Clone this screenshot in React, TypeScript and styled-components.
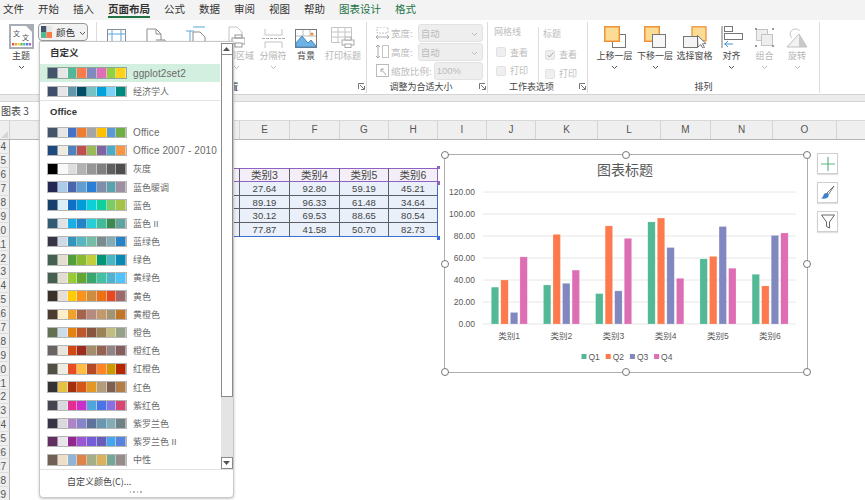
import React from 'react';
import styled, { createGlobalStyle } from 'styled-components';

const Global = createGlobalStyle`
  html, body { margin: 0; padding: 0; overflow: hidden; background: #fff; }
  body { font-family: "Noto Sans CJK SC", "Liberation Sans", sans-serif; }
  * { box-sizing: border-box; }
`;

const Page = styled.div`
  position: relative; width: 865px; height: 500px; overflow: hidden; background: #fff;
  display: flex; flex-direction: column;
`;
const TabBar = styled.div`
  height: 20px; background: #f3f3f3; display: flex; gap: 14px; padding-left: 3px; flex: none;
`;
const Tab = styled.div<{ $active?: boolean; $green?: boolean }>`
  position: relative; font-size: 10.5px; line-height: 17px; white-space: nowrap;
  color: ${p => (p.$green ? '#217346' : '#333')};
  font-weight: ${p => (p.$active ? 700 : 400)};
  ${p => p.$active ? `border-bottom: 2px solid #217346; height: 17.5px;` : ''}
`;
const Ribbon = styled.div`
  height: 75px; flex: none; background: #fff; display: flex; padding: 2px 0 1px; border-bottom: 1px solid #d4d4d4;
`;
const Group = styled.div<{ $w: number; $noBorder?: boolean }>`
  width: ${p => p.$w}px; flex: none; display: flex; flex-direction: column;
  border-right: ${p => (p.$noBorder ? 'none' : '1px solid #dcdcdc')};
`;
const GroupBody = styled.div<{ $pl?: number }>`
  flex: 1; display: flex; padding-left: ${p => p.$pl || 0}px; min-height: 0;
`;
const GroupFooter = styled.div`
  height: 13px; display: flex; align-items: center; flex: none;
`;
const GroupTitle = styled.div`
  flex: 1; text-align: center; font-size: 9px; line-height: 13px; color: #444;
`;
const LauncherBox = styled.div<{ $w: number }>`
  width: ${p => p.$w}px; display: flex; justify-content: flex-end; padding-right: 1px; flex: none;
`;
const LargeBtn = styled.div<{ $w: number }>`
  width: ${p => p.$w}px; flex: none; display: flex; flex-direction: column; align-items: center;
`;
const IconSlot = styled.div`
  height: 28px; display: flex; align-items: flex-end; justify-content: center; flex: none; padding-bottom: 2px;
`;
const BtnLabel = styled.div<{ $off?: boolean }>`
  font-size: 9px; line-height: 12px; white-space: nowrap;
  color: ${p => (p.$off ? '#b5b5b5' : '#444')};
`;
const Chevron = styled.svg`
  width: 7px; height: 5px; margin-top: 3px; flex: none;
`;
const ThemeCol = styled.div`
  display: flex; flex-direction: column; align-items: center; width: 24px; margin-left: 9px; padding-top: 2px;
`;
const ThemeTile = styled.div`
  width: 25px; height: 25px; background: #fff; border: 2px solid #a9adb5; margin-bottom: 1px;
  display: flex; align-items: center; justify-content: center;
`;
const ColorBtn = styled.div`
  margin: 1px 0 0 5px; width: 50px; height: 18px; border: 1px solid #9a9a9a; border-radius: 4px; background: #f2f2f2;
  display: flex; align-items: center; padding-left: 2px; gap: 4px; font-size: 9.5px; color: #333;
`;
const SizeCol = styled.div`
  flex: 1; display: flex; flex-direction: column; padding: 1px 5px 0 9px;
`;
const SizeRow = styled.div`
  height: 19px; display: flex; align-items: center; gap: 2px; flex: none;
`;
const OffText = styled.span`
  font-size: 9.5px; color: #bcbcbc; white-space: nowrap; flex: 1;
`;
const SelectBox = styled.div<{ $w: number }>`
  width: ${p => p.$w}px; height: 18px; flex: none; background: #eeeeee; border: 1px solid #e2e2e2; border-radius: 3px;
  display: flex; align-items: center; justify-content: space-between; padding: 0 4px 0 2px;
  font-size: 9.5px; color: #bcbcbc; font-family: "Liberation Sans", "Noto Sans CJK SC", sans-serif;
`;
const OptCol = styled.div<{ $w: number; $line?: boolean }>`
  width: ${p => p.$w}px; display: flex; flex-direction: column; padding-top: 3px; flex: none;
  ${p => (p.$line ? 'border-left: 1px solid #dedede; padding-left: 4px; height: 56px; margin-top: 5px; padding-top: 0;' : '')}
`;
const OptHead = styled.div`
  font-size: 9px; line-height: 14px; color: #bcbcbc; height: 18px; white-space: nowrap;
`;
const OptRow = styled.div`
  height: 19px; display: flex; align-items: center; gap: 4px; padding-left: 2px; font-size: 9px; color: #bcbcbc; white-space: nowrap;
`;
const CheckBox = styled.div`
  width: 10px; height: 10px; background: #efefef; border: 1px solid #e2e2e2; border-radius: 2px; flex: none;
  display: flex; align-items: center; justify-content: center;
`;
const Band = styled.div`
  height: 7px; flex: none; background: #ececec; border-bottom: 1px solid #d4d4d4;
`;
const NameBar = styled.div`
  height: 18px; flex: none; background: #fff; display: flex; align-items: center; padding: 0 0 1px 1px;
  font-size: 10px; color: #444;
`;

/* Sheet */
const Sheet = styled.div`
  flex: 1; display: flex; flex-direction: column; min-height: 0; overflow: hidden;
`;
const HeaderRow = styled.div`
  height: 20px; flex: none; display: flex; background: #efefef; border-top: 1px solid #d8d8d8; border-bottom: 1px solid #b5b5b5;
`;
const Corner = styled.div`
  width: 10px; flex: none; border-right: 1px solid #d0d0d0; display: flex; align-items: flex-end; justify-content: flex-end; padding: 0 1px 1px 0;
`;
const CornerMark = styled.div`
  width: 0; height: 0; border-left: 7px solid transparent; border-bottom: 7px solid #d6d6d6;
`;
const ColHead = styled.div<{ $w: number }>`
  width: ${p => p.$w}px; flex: none; border-right: 1px solid #d4d4d4; text-align: center;
  font: 10px/18px "Liberation Sans", sans-serif; color: #555;
`;
const Row = styled.div`
  height: 13.9px; flex: none; display: flex;
`;
const RowHead = styled.div`
  width: 10px; flex: none; background: #efefef; border-right: 1px solid #b5b5b5; border-bottom: 1px solid #dcdcdc;
  display: flex; justify-content: flex-end; align-items: center; overflow: hidden; padding: 1px 3px 0 0;
  font: 10px/13px "Liberation Sans", sans-serif; color: #555; white-space: nowrap;
`;
const Cell = styled.div<{ $w: number; $head?: boolean; $fill?: boolean; $last?: boolean; $top?: boolean; $end?: boolean }>`
  width: ${p => p.$w}px; flex: none; text-align: center; white-space: nowrap;
  font-family: "Liberation Sans", "Noto Sans CJK SC", sans-serif;
  font-size: ${p => (p.$head ? 10.5 : 9.5)}px; line-height: 13px; color: #444;
  ${p => p.$fill ? `background: ${p.$head ? '#f3eef8' : '#e9f0fa'};` : ''}
  ${p => p.$fill && p.$head ? 'border-top: 1.5px solid #8e62c0; border-bottom: 1.5px solid #8e62c0;' : ''}
  ${p => p.$fill && !p.$head ? `border-bottom: 1px solid ${p.$end ? '#3b6fd0' : '#5a5f68'};` : ''}
  ${p => p.$fill ? `border-right: ${p.$last ? (p.$head ? '1.5px solid #8e62c0' : '1.5px solid #3b6fd0') : '1px solid #5a5f68'};` : ''}
`;
const CornerDot = styled.i<{ $c: string; $top: number }>`
  position: absolute; left: 436.5px; top: ${p => p.$top}px; width: 3.5px; height: 3.5px; background: ${p => p.$c};
`;

/* Theme colours menu */
const Menu = styled.div`
  position: absolute; left: 39px; top: 41px; width: 195px; height: 457px; background: #fff;
  border: 1px solid #c8c8c8; border-radius: 0 0 4px 4px; box-shadow: 0 1px 3px rgba(0,0,0,.22);
  display: flex; flex-direction: column;
`;
const MenuBody = styled.div`
  display: flex; height: 428px; flex: none; border-bottom: 1px solid #e2e2e2;
`;
const MenuList = styled.div`
  width: 180px; flex: none; display: flex; flex-direction: column;
`;
const MenuHead = styled.div`
  height: 22px; flex: none; padding: 0 0 2px 10px; display: flex; align-items: center;
  font: 700 9.5px "Liberation Sans", "Noto Sans CJK SC", sans-serif; color: #333;
`;
const MenuItem = styled.div<{ $sel?: boolean }>`
  height: 18.2px; flex: none; display: flex; align-items: center; gap: 7px; padding-left: 8px;
  background: ${p => (p.$sel ? '#d3efdf' : 'transparent')};
`;
const Strip = styled.div<{ $sel?: boolean }>`
  display: flex; width: 78px; height: 9.5px; flex: none;
  outline: 1px solid ${p => (p.$sel ? '#8fa898' : '#b5b5b5')};
`;
const Swatch = styled.i<{ $c: string }>`
  flex: 1; background: ${p => p.$c}; border-right: .5px solid rgba(255,255,255,.45);
`;
const ItemLabel = styled.span<{ $latin?: boolean }>`
  font-family: "Liberation Sans", "Noto Sans CJK SC", sans-serif; color: #6a6a6a; white-space: nowrap;
  font-size: ${p => (p.$latin ? 10 : 9)}px; letter-spacing: ${p => (p.$latin ? '.1px' : '0')};
`;
const Divider = styled.div`
  height: 1px; flex: none; background: #e2e2e2; margin-top: 0;
`;
const ScrollBar = styled.div`
  width: 12px; margin: 1px 0 0 .5px; flex: none; display: flex; flex-direction: column;
`;
const ScrollBtn = styled.div`
  height: 12px; flex: none; border: 1px solid #8a8a8a; background: #fff; display: flex; align-items: center; justify-content: center;
`;
const ScrollThumb = styled.div`
  height: 342px; flex: none; background: #fff; border: 1px solid #8a8a8a; border-top: none;
`;
const ScrollTrack = styled.div`
  flex: 1; background: #e4e4e4;
`;
const MenuFoot = styled.div`
  height: 21px; flex: none; padding: 5px 0 0 27px; font-size: 9px; line-height: 14px; color: #444;
`;
const Grip = styled.div`
  display: flex; gap: 2px; justify-content: center; flex: none; height: 5px; padding-right: 2px;
`;
const GripDot = styled.i`
  width: 1.5px; height: 1.5px; background: #b8b8b8; display: block;
`;

/* Chart */
const ChartLayer = styled.div`
  position: absolute; left: 444px; top: 154px; display: flex; gap: 9px; align-items: flex-start;
`;
const ChartFrame = styled.div`
  position: relative; width: 364px; height: 219px; background: #fff; border: 1.5px solid #adadad;
`;
const Handle = styled.i<{ $x: number; $y: number }>`
  position: absolute; width: 8px; height: 8px; border-radius: 50%; background: #fff; border: 1.2px solid #777;
  left: calc(${p => p.$x}% - 4px); top: calc(${p => p.$y}% - 4px);
`;
const SideButtons = styled.div`
  display: flex; flex-direction: column; gap: 8px; margin-top: -1px;
`;
const SideBtn = styled.div`
  width: 21px; height: 21px; background: #fff; border: 1px solid #cfcfcf; box-shadow: 0 1px 1px rgba(0,0,0,.12);
  display: flex; align-items: center; justify-content: center;
`;

const Chev = ({ c = '#555' }: { c?: string }) => (
  <Chevron viewBox="0 0 7 5"><path d="M1 1l2.5 2.5L6 1" fill="none" stroke={c} strokeWidth="1" /></Chevron>
);
const Launcher = () => (
  <svg width="7" height="7" viewBox="0 0 7 7"><path d="M.5 6V.5H6M6.5 3v3.5H3M2 2l4 4" fill="none" stroke="#666" strokeWidth=".9" /></svg>
);

const G = '#8c8c8c';
const Off = '#c4c4c4';
const B = '#5aa5dc';
const I = ({ w, h, children }: { w: number; h: number; children: React.ReactNode }) => (
  <svg width={w} height={h} viewBox={`0 0 ${w} ${h}`} fill="none">{children}</svg>
);
const MarginIcon = () => <I w={19} h={19}><rect x=".5" y=".5" width="18" height="18" stroke={G} /><path d="M5 0v19M14 0v19M0 5h19" stroke={B} /></I>;
const PageIcon = () => <I w={21} h={20}><path d="M2 1h9l5 5v13H2zM11 1v5h5" stroke={G} /><path d="M11 12h9v7h-9" stroke={G} fill="#fff" /></I>;
const SizeIcon = () => <I w={21} h={22}><path d="M5 5v17M1 5h8" stroke={B} /><path d="M8 1h12" stroke={B} /><path d="M8 6h7l5 5v10H8z" stroke={G} fill="#fff" /></I>;
const PrintAreaIcon = () => <I w={18} h={22}><path d="M2 1h8l5 5v7M2 1v19h4" stroke={Off} /><rect x="5" y="12" width="13" height="6" stroke="#9a9a9a" fill="#fff" /><rect x="8" y="9" width="7" height="3" stroke="#9a9a9a" /><rect x="8" y="17" width="7" height="4" stroke="#9a9a9a" fill="#fff" /></I>;
const BreakIcon = () => <I w={23} h={19}><path d="M3 0v6h17V0M3 19v-6h17v6" stroke={Off} /><path d="M0 9.5h23" stroke="#aaa" strokeDasharray="3 1" /></I>;
const BgIcon = () => (
  <I w={22} h={19}>
    <rect x=".5" y=".5" width="21" height="18" stroke="#777" fill="#fff" />
    <path d="M1 7h20M8 1v6M15 1v6" stroke="#bbb" />
    <path d="M1 18V14l6-7 6 7 3-3 5 6v1z" fill="#6db3e8" stroke="#4a86b8" />
    <circle cx="17" cy="5" r="1.5" fill="#ed8b2f" />
  </I>
);
const PrintTitleIcon = () => <I w={24} h={21}><path d="M.5.5h20v13H13M.5.5v15H9M.5 5h20M.5 10H13M7 1v14M14 1v9" stroke={Off} /><rect x="11" y="13" width="12" height="5" stroke="#aaa" fill="#fff" /><rect x="14" y="10" width="6" height="3" stroke="#aaa" fill="#fff" /><rect x="14" y="17" width="6" height="3.5" stroke="#aaa" fill="#fff" /></I>;
const UpIcon = () => <I w={22} h={22}><rect x="8.5" y="8.5" width="13" height="13" stroke="#777" fill="#fff" /><rect x=".8" y=".8" width="14.5" height="14.5" stroke="#ed8b2f" strokeWidth="1.4" fill="#fbdc95" /></I>;
const DownIcon = () => <I w={22} h={22}><rect x=".8" y=".8" width="14.5" height="14.5" stroke="#ed8b2f" strokeWidth="1.4" fill="#fbdc95" /><rect x="8.5" y="8.5" width="13" height="13" stroke="#777" fill="#f7f7f7" /></I>;
const PaneIcon = () => (
  <I w={24} h={22}>
    <rect x="9" y=".8" width="14" height="14" stroke="#ed8b2f" strokeWidth="1.2" fill="#fbdc95" />
    <rect x=".5" y="10.5" width="14" height="11" stroke="#777" fill="#f4f4f4" />
    <path d="M14.5 9.5l8.5 8-3.5.4 2 3.5-1.8.8-1.8-3.6-3 2.4z" fill="#fff" stroke="#555" strokeWidth=".8" />
  </I>
);
const AlignIcon = () => <I w={22} h={22}><path d="M1 0v22" stroke="#777" /><rect x="3.5" y=".5" width="8" height="5" stroke="#777" fill="#fff" /><rect x="3.5" y="7.5" width="18" height="6" stroke="#777" fill="#fff" /><path d="M3 18h9M7 15l-3 3 3 3" stroke="#3f97d9" /></I>;
const ComboIcon = () => <I w={21} h={21}><rect x="2.5" y="2.5" width="11" height="11" stroke={Off} fill="#eee" /><rect x="7.5" y="7.5" width="11" height="11" stroke={Off} fill="#eee" /><path d="M1 1h2v2H1zM18 1h2v2h-2zM1 18h2v2H1zM18 18h2v2h-2z" fill="#999" /></I>;
const RotateIcon = () => <I w={22} h={20}><path d="M1 19L13 6l8 13z" stroke="#c0c0c0" fill="#f2f2f2" /><path d="M13 6l8 13h-8z" fill="#c8c8c8" /><path d="M6 10C2 6 5 1 10 1c2 0 3 1 4 2" stroke="#c4c4c4" /></I>;
const WidthIcon = () => <I w={13} h={12}><path d="M1 0h11v6H1z" stroke={Off} strokeDasharray="2 1" /><path d="M0 10h13M2 8l-2 2 2 2M11 8l2 2-2 2" stroke="#aaa" /></I>;
const HeightIcon = () => <I w={13} h={13}><rect x="6.5" y=".5" width="6" height="12" stroke={Off} /><path d="M2 0v13M0 2l2-2 2 2M0 11l2 2 2-2" stroke="#aaa" /></I>;
const ScaleIcon = () => <I w={13} h={13}><rect x=".5" y=".5" width="12" height="12" stroke="#bbb" /><path d="M5 5l5 6M5 5v3M5 5h3" stroke="#aaa" /></I>;

const tabs = ['文件', '开始', '插入', '页面布局', '公式', '数据', '审阅', '视图', '帮助', '图表设计', '格式'];

const columns: [string, number][] = [
  ['A', 76], ['B', 50], ['C', 52], ['D', 52], ['E', 50], ['F', 50], ['G', 49], ['H', 49], ['I', 49], ['J', 49],
  ['K', 62], ['L', 63], ['M', 50], ['N', 62], ['O', 64], ['P', 80],
];

const tableRows: string[][] = [
  ['类别2', '类别3', '类别4', '类别5', '类别6'],
  ['35.50', '27.64', '92.80', '59.19', '45.21'],
  ['81.50', '89.19', '96.33', '61.48', '34.64'],
  ['37.00', '30.12', '69.53', '88.65', '80.54'],
  ['49.00', '77.87', '41.58', '50.70', '82.73'],
];

const custom: [string, string[]][] = [
  ['ggplot2set2', ['#44546a', '#e7e6e6', '#52b796', '#fb7b4b', '#7f8abf', '#df6fb4', '#93d040', '#ffd11a']],
  ['经济学人', ['#3f4f6b', '#e7e6e6', '#6297ab', '#014d64', '#74c2c4', '#01a2d9', '#7ad2f6', '#00887d']],
];
const office: [string, string[]][] = [
  ['Office', ['#44546a', '#e7e6e6', '#4472c4', '#ed7d31', '#a5a5a5', '#ffc000', '#5b9bd5', '#70ad47']],
  ['Office 2007 - 2010', ['#1f497d', '#eeece1', '#4f81bd', '#c0504d', '#9bbb59', '#8064a2', '#4bacc6', '#f79646']],
  ['灰度', ['#000000', '#f8f8f8', '#dddddd', '#b2b2b2', '#969696', '#808080', '#5f5f5f', '#4d4d4d']],
  ['蓝色暖调', ['#242852', '#acccea', '#4a66ac', '#629dd1', '#297fd5', '#7f8fa9', '#5aa2ae', '#9d90a0']],
  ['蓝色', ['#17406d', '#dbeff9', '#0f6fc6', '#009dd9', '#0bd0d9', '#10cf9b', '#7cca62', '#a5c249']],
  ['蓝色 II', ['#335b74', '#dfe3e5', '#1cade4', '#2683c6', '#27ced7', '#42ba97', '#3e8853', '#62a39f']],
  ['蓝绿色', ['#373545', '#cedbe6', '#3494ba', '#58b6c0', '#75bda7', '#7a8c8e', '#84acb6', '#2683c6']],
  ['绿色', ['#455f51', '#e3ded1', '#549e39', '#8ab833', '#c0cf3a', '#029676', '#4ab5c4', '#0989b1']],
  ['黄绿色', ['#455f51', '#e3ded1', '#99cb38', '#63a537', '#37a76f', '#44c1a3', '#4eb3cf', '#51c3f9']],
  ['黄色', ['#39302a', '#e5dedb', '#ffca08', '#f8931d', '#ce8d3e', '#ec7016', '#e64823', '#9c6a6a']],
  ['黄橙色', ['#4e3b30', '#fbeec9', '#f0a22e', '#a5644e', '#b58b80', '#c3986d', '#a19574', '#c17529']],
  ['橙色', ['#637052', '#ccddea', '#e48312', '#bd582c', '#865640', '#9b8357', '#c2bc80', '#94a088']],
  ['橙红色', ['#696464', '#e9e5dc', '#d34817', '#9b2d1f', '#a28e6a', '#956251', '#918485', '#855d5d']],
  ['红橙色', ['#505046', '#eeece0', '#e84c22', '#ffbd47', '#b64926', '#ff8427', '#cc9900', '#b22600']],
  ['红色', ['#323232', '#e5c243', '#a5300f', '#d55816', '#e19825', '#b19c7d', '#7f5f52', '#b27d49']],
  ['紫红色', ['#454551', '#d8d9dc', '#e32d91', '#c830cc', '#4ea6dc', '#4775e7', '#8971e1', '#d54773']],
  ['紫罗兰色', ['#373545', '#dcd8dc', '#ad84c6', '#8784c7', '#5d739a', '#6997af', '#84acb6', '#6f8183']],
  ['紫罗兰色 II', ['#632e62', '#eae5eb', '#92278f', '#9b57d3', '#755dd9', '#665eb8', '#45a5ed', '#5982db']],
  ['中性', ['#726056', '#eee0c8', '#8fb5d6', '#e08348', '#a5ae85', '#dcb15d', '#75a798', '#968c8c']],
];

const series = [
  { name: 'Q1', color: '#53b895', values: [33.5, 35.5, 27.64, 92.8, 59.19, 45.21] },
  { name: 'Q2', color: '#fc7a4d', values: [40, 81.5, 89.19, 96.33, 61.48, 34.64] },
  { name: 'Q3', color: '#8088bf', values: [10.5, 37, 30.12, 69.53, 88.65, 80.54] },
  { name: 'Q4', color: '#de6eb4', values: [61, 49, 77.87, 41.58, 50.7, 82.73] },
];
const axisFont = '"Liberation Sans", "Noto Sans CJK SC", sans-serif';

const Chart = () => {
  const left = 38;
  const right = 351;
  const zero = 169;
  const unit = 1.1;
  const cat = (right - left) / 6;
  return (
    <svg width="361" height="216" viewBox="0 0 361 216">
      <text x="180" y="20" textAnchor="middle" fontSize="14" fill="#595959" fontFamily={axisFont}>图表标题</text>
      {[0, 20, 40, 60, 80, 100, 120].map(v => (
        <g key={v}>
          <line x1={left} x2={right} y1={zero - v * unit} y2={zero - v * unit} stroke="#e6e6e6" />
          <text x="30" y={zero - v * unit + 3} textAnchor="end" fontSize="8.5" fill="#595959" fontFamily={axisFont}>{v.toFixed(2)}</text>
        </g>
      ))}
      {series.map((s, si) => s.values.map((v, ci) => (
        <rect key={s.name + ci} x={left + cat * (ci + .5) - 17.8 + si * 9.55} y={zero - v * unit} width="7.4" height={v * unit} fill={s.color} stroke="#fff" strokeOpacity=".4" strokeWidth=".5" />
      )))}
      {[1, 2, 3, 4, 5, 6].map(n => (
        <text key={n} x={left + cat * (n - .5)} y="184" textAnchor="middle" fontSize="8.5" fill="#595959" fontFamily={axisFont}>{`类别${n}`}</text>
      ))}
      {series.map((s, i) => (
        <g key={s.name}>
          <rect x={136.5 + i * 24.2} y="199" width="5" height="5" fill={s.color} />
          <text x={143.5 + i * 24.2} y="205" fontSize="8.5" fill="#595959" fontFamily={axisFont}>{s.name}</text>
        </g>
      ))}
    </svg>
  );
};

const palettes = (list: [string, string[]][], selected?: string) => list.map(([name, colors]) => (
  <MenuItem key={name} $sel={name === selected}>
    <Strip $sel={name === selected}>{colors.map((c, i) => <Swatch key={i} $c={c} />)}</Strip>
    <ItemLabel $latin={/^[A-Za-z]/.test(name)}>{name}</ItemLabel>
  </MenuItem>
));

const rowNumbers = Array.from({ length: 26 }, (_, i) => i + 4);

export default function App() {
  return (
    <Page>
      <Global />
      <TabBar>
        {tabs.map((t, i) => <Tab key={t} $active={t === '页面布局'} $green={i >= 9}>{t}</Tab>)}
      </TabBar>
      <Ribbon>
        <Group $w={97}>
          <GroupBody>
            <ThemeCol>
              <ThemeTile>
                <svg width="21" height="21" viewBox="0 0 21 21">
                  <path d="M15 0h6v6z" fill="#a9adb5" />
                  <text x="2" y="10" fontSize="7" fill="#555" fontFamily="Noto Sans CJK SC">文</text>
                  <text x="11" y="14" fontSize="7" fill="#555" fontFamily="Noto Sans CJK SC">文</text>
                  {['#e0544b', '#f0a030', '#f3d23a', '#70ad47', '#45b7c4', '#5b7fd5', '#a365c9'].map((c, i) => <rect key={c} x={1 + i * 2.8} y="17" width="2.2" height="2.5" fill={c} />)}
                </svg>
              </ThemeTile>
              <BtnLabel>主题</BtnLabel>
              <Chev />
            </ThemeCol>
            <ColorBtn>
              <svg width="11" height="12" viewBox="0 0 11 12">
                <rect width="5.5" height="6" fill="#44546a" /><rect x="5.5" width="5.5" height="6" fill="#e7e6e6" />
                <rect y="6" width="5.5" height="6" fill="#52b796" /><rect x="5.5" y="6" width="5.5" height="6" fill="#fb7b4b" />
              </svg>
              颜色
              <Chev />
            </ColorBtn>
          </GroupBody>
          <GroupFooter />
        </Group>
        <Group $w={270}>
          <GroupBody>
            <LargeBtn $w={39}><IconSlot><MarginIcon /></IconSlot><BtnLabel>页边距</BtnLabel></LargeBtn>
            <LargeBtn $w={39}><IconSlot><PageIcon /></IconSlot><BtnLabel>纸张方向</BtnLabel></LargeBtn>
            <LargeBtn $w={41}><IconSlot><SizeIcon /></IconSlot><BtnLabel>纸张大小</BtnLabel></LargeBtn>
            <LargeBtn $w={40}><IconSlot><PrintAreaIcon /></IconSlot><BtnLabel $off>打印区域</BtnLabel><Chev c="#bbb" /></LargeBtn>
            <LargeBtn $w={34}><IconSlot><BreakIcon /></IconSlot><BtnLabel $off>分隔符</BtnLabel><Chev c="#bbb" /></LargeBtn>
            <LargeBtn $w={32}><IconSlot><BgIcon /></IconSlot><BtnLabel>背景</BtnLabel></LargeBtn>
            <LargeBtn $w={42}><IconSlot><PrintTitleIcon /></IconSlot><BtnLabel $off>打印标题</BtnLabel></LargeBtn>
          </GroupBody>
          <GroupFooter>
            <GroupTitle>页面设置</GroupTitle>
            <LauncherBox $w={22}><Launcher /></LauncherBox>
          </GroupFooter>
        </Group>
        <Group $w={121}>
          <GroupBody>
            <SizeCol>
              <SizeRow><WidthIcon /><OffText>宽度:</OffText><SelectBox $w={65}>自动<Chev c="#bbb" /></SelectBox></SizeRow>
              <SizeRow><HeightIcon /><OffText>高度:</OffText><SelectBox $w={65}>自动<Chev c="#bbb" /></SelectBox></SizeRow>
              <SizeRow><ScaleIcon /><OffText>缩放比例:</OffText><SelectBox $w={49}>100%</SelectBox></SizeRow>
            </SizeCol>
          </GroupBody>
          <GroupFooter>
            <GroupTitle>调整为合适大小</GroupTitle>
            <LauncherBox $w={12}><Launcher /></LauncherBox>
          </GroupFooter>
        </Group>
        <Group $w={100}>
          <GroupBody $pl={6}>
            <OptCol $w={44}>
              <OptHead>网格线</OptHead>
              <OptRow><CheckBox />查看</OptRow>
              <OptRow><CheckBox />打印</OptRow>
            </OptCol>
            <OptCol $w={49} $line>
              <OptHead>标题</OptHead>
              <OptRow><CheckBox><svg width="7" height="6" viewBox="0 0 7 6"><path d="M.5 3l2 2L6.500 .5" fill="none" stroke="#aaa" /></svg></CheckBox>查看</OptRow>
              <OptRow><CheckBox />打印</OptRow>
            </OptCol>
          </GroupBody>
          <GroupFooter>
            <GroupTitle>工作表选项</GroupTitle>
            <LauncherBox $w={12}><Launcher /></LauncherBox>
          </GroupFooter>
        </Group>
        <Group $w={232}>
          <GroupBody $pl={6}>
            <LargeBtn $w={41}><IconSlot><UpIcon /></IconSlot><BtnLabel>上移一层</BtnLabel><Chev /></LargeBtn>
            <LargeBtn $w={40}><IconSlot><DownIcon /></IconSlot><BtnLabel>下移一层</BtnLabel><Chev /></LargeBtn>
            <LargeBtn $w={39}><IconSlot><PaneIcon /></IconSlot><BtnLabel>选择窗格</BtnLabel></LargeBtn>
            <LargeBtn $w={35}><IconSlot><AlignIcon /></IconSlot><BtnLabel>对齐</BtnLabel><Chev /></LargeBtn>
            <LargeBtn $w={31}><IconSlot><ComboIcon /></IconSlot><BtnLabel $off>组合</BtnLabel><Chev c="#bbb" /></LargeBtn>
            <LargeBtn $w={34}><IconSlot><RotateIcon /></IconSlot><BtnLabel $off>旋转</BtnLabel><Chev c="#bbb" /></LargeBtn>
          </GroupBody>
          <GroupFooter><GroupTitle>排列</GroupTitle></GroupFooter>
        </Group>
      </Ribbon>
      <Band />
      <NameBar>图表 3</NameBar>
      <Sheet>
        <HeaderRow>
          <Corner><CornerMark /></Corner>
          {columns.map(([n, w]) => <ColHead key={n} $w={w}>{n}</ColHead>)}
        </HeaderRow>
        {rowNumbers.map(n => {
          const data = tableRows[n - 6];
          return (
            <Row key={n}>
              <RowHead>{n}</RowHead>
              {columns.slice(0, 3).map(([c, w]) => <Cell key={c} $w={w} />)}
              {data ? data.map((v, i) => (
                <Cell key={i} $w={columns[i + 3][1]} $fill $head={n === 6} $last={i === 4} $end={n === 10}>{v}</Cell>
              )) : null}
            </Row>
          );
        })}
      </Sheet>
      <CornerDot $c="#8e62c0" $top={165.5} />
      <CornerDot $c="#8e62c0" $top={181} />
      <CornerDot $c="#3b6fd0" $top={236} />
      <ChartLayer>
        <ChartFrame>
          <Chart />
          {[[0, 0], [50, 0], [100, 0], [0, 50], [100, 50], [0, 100], [50, 100], [100, 100]].map(([x, y]) => (
            <Handle key={`${x}-${y}`} $x={x} $y={y} />
          ))}
        </ChartFrame>
        <SideButtons>
          <SideBtn><svg width="14" height="14" viewBox="0 0 14 14"><path d="M7 0v14M0 7h14" stroke="#5fb57c" strokeWidth="1.2" /></svg></SideBtn>
          <SideBtn>
            <svg width="15" height="15" viewBox="0 0 15 15">
              <path d="M14 1L7 8l1.500 1.500z" fill="#fff" stroke="#555" strokeWidth=".8" />
              <path d="M6.500 8C4 8 3.500 10 3 11.500c-.5 1-1.500 1.500-2.500 1.500 2.500 1.200 6.500 1 8-1.500.6-1.300 0-2.500-2-3.500z" fill="#3f7fd0" />
            </svg>
          </SideBtn>
          <SideBtn><svg width="14" height="15" viewBox="0 0 14 15"><path d="M.5 1h13L8.500 8v6l-3-1.500V8z" fill="none" stroke="#666" strokeWidth="1" /></svg></SideBtn>
        </SideButtons>
      </ChartLayer>
      <Menu>
        <MenuBody>
          <MenuList>
            <MenuHead>自定义</MenuHead>
            {palettes(custom, 'ggplot2set2')}
            <Divider />
            <MenuHead>Office</MenuHead>
            {palettes(office)}
          </MenuList>
          <ScrollBar>
            <ScrollBtn><svg width="7" height="4" viewBox="0 0 7 4"><path d="M3.500 0L7 4H0z" fill="#555" /></svg></ScrollBtn>
            <ScrollThumb />
            <ScrollTrack />
            <ScrollBtn><svg width="7" height="4" viewBox="0 0 7 4"><path d="M0 0h7L3.500 4z" fill="#555" /></svg></ScrollBtn>
          </ScrollBar>
        </MenuBody>
        <MenuFoot>自定义颜色(C)...</MenuFoot>
        <Grip><GripDot /><GripDot /><GripDot /><GripDot /></Grip>
      </Menu>
    </Page>
  );
}
